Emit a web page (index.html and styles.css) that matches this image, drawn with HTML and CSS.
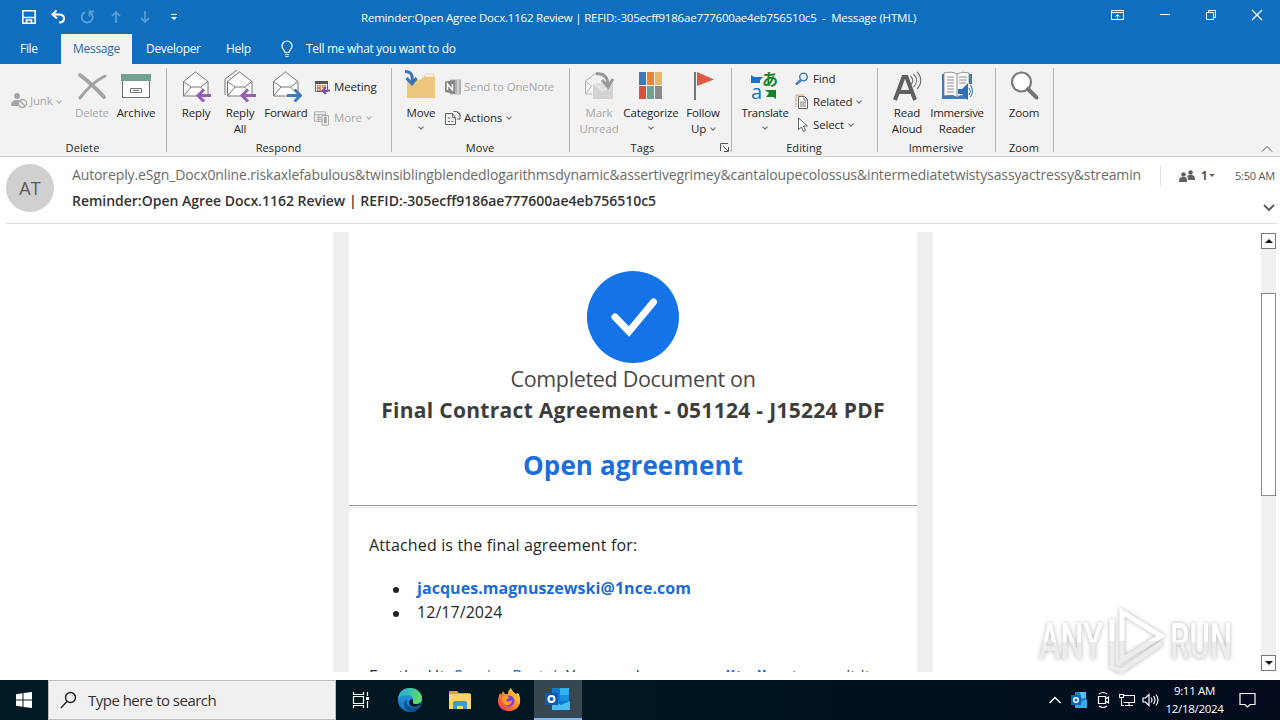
FILE: index.html
```html
<!DOCTYPE html>
<html lang="en">
<head>
<meta charset="utf-8">
<title>Message (HTML)</title>
<link rel="stylesheet" href="styles.css">
</head>
<body>
<div class="screen">
<header class="titlebar">
  <div class="quick">
    <svg width="16" height="16" viewBox="0 0 16 16" fill="none" stroke="#fff" stroke-width="1.600"><path d="M1.800 1.800h12.400v12.400H1.800zM2 8.500h12M5.500 14v-3h5v3"/></svg>
    <svg width="16" height="16" viewBox="0 0 16 16" fill="none" stroke="#fff" stroke-width="2"><path d="M6.500 1.500L2.500 5.500l4.500 4M3 5.500h6c3 0 5 1.500 5 4s-2 4-5 4"/></svg>
    <svg class="dim" width="16" height="16" viewBox="0 0 16 16" fill="none" stroke="#fff" stroke-width="2"><path d="M6 3a5.500 5.500 0 1 0 5 .3M10.500 7.500V2.500h4.500"/></svg>
    <svg class="dim" width="16" height="16" viewBox="0 0 16 16" fill="none" stroke="#fff" stroke-width="1.800"><path d="M8 14V3M4 7l4-4 4 4"/></svg>
    <svg class="dim" width="16" height="16" viewBox="0 0 16 16" fill="none" stroke="#fff" stroke-width="1.800"><path d="M8 2v11M4 9l4 4 4-4"/></svg>
    <svg width="16" height="16" viewBox="0 0 16 16" fill="#fff"><path d="M5 5h6v1H5zM5 8h6l-3 3z"/></svg>
  </div>
  <div class="title">Reminder:Open Agree Docx.1162 Review | REFID:-305ecff9186ae777600ae4eb756510c5&nbsp; -&nbsp; Message (HTML)</div>
  <div class="winctl">
    <svg width="14" height="14" viewBox="0 0 14 14" fill="none" stroke="#fff"><path d="M.5 2.500h12v9H.5zM.5 4.500h12M6.500 11V6.500M4.500 8.500l2-2 2 2"/></svg>
    <svg width="12" height="12" viewBox="0 0 12 12" fill="none" stroke="#fff"><path d="M1 5.500h10"/></svg>
    <svg width="12" height="12" viewBox="0 0 12 12" fill="none" stroke="#fff"><path d="M1.500 3.500h7v7h-7zM3.500 3.500v-2h7v7h-2"/></svg>
    <svg width="12" height="12" viewBox="0 0 12 12" fill="none" stroke="#fff" stroke-width="1.300"><path d="M1 1l10 10M11 1L1 11"/></svg>
  </div>
</header>
<nav class="tabs">
  <span class="tab tab-file">File</span>
  <span class="tab tab-on">Message</span>
  <span class="tab tab-dev">Developer</span>
  <span class="tab tab-help">Help</span>
  <span class="tell"><svg width="14" height="18" viewBox="0 0 14 18" fill="none" stroke="#fff" stroke-width="1.200"><path d="M5 12.500C5 10 2 9.500 2 6a5 5 0 0 1 10 0c0 3.500-3 4-3 6.500zM5 14.500h4M5.500 16.500h3"/></svg>Tell me what you want to do</span>
</nav>
<section class="ribbon">
  <div class="group g-delete">
    <div class="tools">
      <div class="junk off"><svg width="17" height="17" viewBox="0 0 17 17"><circle cx="6" cy="4" r="3" fill="#a6a6a6"/><path d="M0 14c0-5 3-6 6-6s3 1 3 2l-2 4z" fill="#a6a6a6"/><circle cx="11.500" cy="11.500" r="4" fill="#f2f2f2" stroke="#a6a6a6" stroke-width="1.400"/><path d="M9 9l5 5" stroke="#a6a6a6" stroke-width="1.400"/></svg><span>Junk</span><i class="chev"></i></div>
      <div class="big off"><svg width="32" height="32" viewBox="0 0 32 32" fill="none" stroke="#a3a3a3" stroke-linecap="round"><path d="M4 5q12 9 24 22" stroke-width="4"/><path d="M29 6Q15 13 4 28" stroke-width="3"/></svg><span>Delete</span></div>
      <div class="big"><svg width="32" height="32" viewBox="0 0 32 32"><path d="M2.500 10h27v17.500h-27z" fill="#fff" stroke="#707070"/><path d="M1 4h30v7H1z" fill="#6fa390"/><path d="M10.500 18.500h11v4h-11z" fill="#fff" stroke="#777"/><path d="M13 20.500h6" stroke="#777"/></svg><span>Archive</span></div>
    </div>
    <div class="caption">Delete</div>
  </div>
  <div class="group g-respond">
    <div class="tools">
      <div class="big"><svg width="32" height="32" viewBox="0 0 32 32" fill="none"><path d="M3.500 11.500L15.500 2l12.500 9.500v14.500H3.500z" fill="#fff" stroke="#777"/><path d="M3.500 11.500L11 17h9.500l7.500-5.500M3.500 26l7.500-9M20.500 17l4 4" stroke="#777"/><path d="M31 25.500H18M24 19.500l-6 6 6 6" stroke="#955cb8" stroke-width="3"/></svg><span>Reply</span></div>
      <div class="big"><svg width="32" height="32" viewBox="0 0 32 32" fill="none"><path d="M1 25V9L13 0" stroke="#777"/><path d="M3.500 11.500L15.500 2l12.500 9.500v14.500H3.500z" fill="#fff" stroke="#777"/><path d="M3.500 11.500L11 17h9.500l7.500-5.500M3.500 26l7.500-9M20.500 17l4 4" stroke="#777"/><path d="M32 25.500H18M24 19.500l-6 6 6 6" stroke="#955cb8" stroke-width="3"/></svg><span>Reply<br>All</span></div>
      <div class="big wide-fwd"><svg width="32" height="32" viewBox="0 0 32 32" fill="none"><path d="M3.500 11.500L15.500 2l12.500 9.500v14.500H3.500z" fill="#fff" stroke="#777"/><path d="M3.500 11.500L11 17h9.500l7.500-5.500M3.500 26l7.500-9M20.500 17l4 4" stroke="#777"/><path d="M17 25.500h13M24.500 19.500l6 6-6 6" stroke="#3f79b8" stroke-width="3"/></svg><span>Forward</span></div>
      <div class="stack two respond-stack">
        <div class="row"><svg width="16" height="16" viewBox="0 0 16 16" fill="none"><path d="M1.500 2.500h12v10h-12z" fill="#fff" stroke="#666"/><path d="M1 2h13v3H1z" fill="#555"/><path d="M3.500 6.500h3v2h-3zM8.500 6.500h3v2h-3zM3.500 9.500h3v2h-3z" stroke="#cf6c3a"/><path d="M16 11.500H9M12 8l-3.500 3.500L12 15" stroke="#8a49ac" stroke-width="2"/></svg><span>Meeting</span></div>
        <div class="row off"><svg width="16" height="16" viewBox="0 0 17 16" fill="none" stroke="#a6a6a6"><path d="M.5 1.500h12v10H.5zM.5 4.500h12M3 7.500h5M3 9.500h5M5 4v7" /><path d="M8.500 5.500h7v10h-7z" fill="#f2f2f2"/><path d="M11 7h2v6h-2z" fill="#a6a6a6"/></svg><span>More</span><i class="chev"></i></div>
      </div>
    </div>
    <div class="caption">Respond</div>
  </div>
  <div class="group g-move">
    <div class="tools">
      <div class="big"><svg width="32" height="32" viewBox="0 0 32 32" fill="none"><path d="M2 10h13l4-3h11v21H2z" fill="#edc77d"/><path d="M19 7l2-3h8v3z" fill="#fff" stroke="#e2b96a" stroke-width=".7"/><path d="M0 1.500c6 0 8 3 7 11M1.500 8l5.500 6 4.500-6" stroke="#3d74b3" stroke-width="3"/></svg><span>Move</span><i class="chev"></i></div>
      <div class="stack two move-stack">
        <div class="row"><svg class="faded" width="16" height="16" viewBox="0 0 16 16"><path d="M5 .5h11v15H5z" fill="#b0b0b0"/><path d="M0 2.500L10 1v14L0 13z" fill="#858585"/><path d="M2.500 11V5l5 6V5" stroke="#fff" fill="none" stroke-width="1.500"/><path d="M13 1v14" stroke="#f2f2f2"/></svg><span class="off">Send to OneNote</span></div>
        <div class="row tight"><svg width="17" height="16" viewBox="0 0 17 16" fill="none" stroke="#666"><path d="M5 3.500h-4.500v11h10v-7l-3-4zM7.500 3.500v4h3M3 8h2M3 11.500h2M6.500 11.500h2"/><path d="M8.500 1.500h3l3.500 3.500v4h-3M12 2c3 0 3 1 3 4"/></svg><span>Actions</span><i class="chev"></i></div>
      </div>
    </div>
    <div class="caption">Move</div>
  </div>
  <div class="group g-tags">
    <div class="tools">
      <div class="big off"><svg width="32" height="32" viewBox="0 0 32 32" fill="none"><path d="M2.500 24V11L14 2.500l10 7M2.500 11l6 5M2.500 24l6-8M2.500 24H9" stroke="#b3b3b3"/><path d="M10 13h20v16H10z" fill="#d5d2d5"/><path d="M10 13l10 8 10-8" stroke="#f5f5f5" fill="#dedede"/><path d="M13 4c8-1 12 3 12 12M19 10l6 7 5-8" stroke="#999" stroke-width="3"/></svg><span>Mark<br>Unread</span></div>
      <div class="big wide-cat"><svg width="32" height="32" viewBox="0 0 32 32"><path d="M4 2h7v13H4z" fill="#3f79b8"/><path d="M12 2h7v13h-7z" fill="#e8853a"/><path d="M20 2h7v13h-7z" fill="#e8b76b"/><path d="M4 16h7v13H4z" fill="#d4533b"/><path d="M12 16h7v13h-7z" fill="#6fa390"/><path d="M20 16h7v13h-7z" fill="#8b8b8b"/></svg><span>Categorize</span><i class="chev"></i></div>
      <div class="big"><svg width="32" height="32" viewBox="0 0 32 32"><path d="M7 2h2v28H7z" fill="#777"/><path d="M10 2l17 7.500L10 16z" fill="#dd5b43"/></svg><span>Follow<br>Up <i class="chev"></i></span></div>
    </div>
    <div class="caption">Tags</div>
    <svg class="launcher" width="9" height="9" viewBox="0 0 9 9" fill="none" stroke="#555"><path d="M.5 8V.5H8M3 3l5 5M8.500 4v4.500H4"/></svg>
  </div>
  <div class="group g-editing">
    <div class="tools">
      <div class="big wide-tr"><svg class="spill" width="32" height="32" viewBox="0 0 32 32"><path d="M2 5l3 2h9l-3 3v3H2z" fill="#1673c8"/><path d="M16 20h11v9l-3-2h-7l3-4z" fill="#128427"/><text x="2" y="29" class="ic-a">a</text><text x="13" y="15" class="ic-jp">あ</text></svg><span>Translate</span><i class="chev"></i></div>
      <div class="stack three">
        <div class="row"><svg width="14" height="14" viewBox="0 0 14 14" fill="none" stroke="#4a7ebb"><circle cx="8.500" cy="5" r="3.800" stroke-width="1.500"/><path d="M6 8l-5 4.500" stroke-width="2.500"/></svg><span>Find</span></div>
        <div class="row"><svg width="14" height="16" viewBox="0 0 14 16" fill="none"><path d="M1 13V1h8" stroke="#dda47d"/><path d="M3.500 2.500h6l3 3v9h-9z" fill="#fff" stroke="#666"/><path d="M9 3v3h3M5 8h6M5 10h6M5 12h6" stroke="#777"/></svg><span>Related</span><i class="chev"></i></div>
        <div class="row"><svg width="14" height="16" viewBox="0 0 14 16"><path d="M3.500 1v11.500l3-2.500 2 4.500 2-1-2-4.500h4z" fill="#fff" stroke="#666"/></svg><span>Select</span><i class="chev"></i></div>
      </div>
    </div>
    <div class="caption">Editing</div>
  </div>
  <div class="group g-immersive">
    <div class="tools">
      <div class="big"><svg width="32" height="32" viewBox="0 0 32 32" fill="none"><path d="M4 30L12.500 7h3L24 30M8 22h12" stroke="#606060" stroke-width="4"/><path d="M19.500 6c3 3 3 6 0 9M22.500 4c4 4 4 9 0 13M26 2c5 5 5 12 0 17" stroke="#707070" stroke-width="1.200"/></svg><span>Read<br>Aloud</span></div>
      <div class="big wide-im"><svg width="32" height="32" viewBox="0 0 32 32" fill="none"><path d="M1 4h30v25H1z" fill="#3f79b8"/><path d="M3 3q8-2 13 1 5-3 12-1v23q-8-2-12 1-5-3-13-1z" fill="#fff" stroke="#777" stroke-width=".8"/><path d="M16 4v23M6 7h7M6 10h7M6 13h7M6 16h7M6 19h7M6 22h7M18 7h8M18 10h8M18 13h7" stroke="#888"/><path d="M27 14h5v16h-5z" fill="#f2f2f2"/><path d="M17 19h4l6-6v17l-6-6h-4z" fill="#2f70b2"/><path d="M28 18q3 3 0 7M29.500 15q4 6 0 12" stroke="#2f70b2"/></svg><span>Immersive<br>Reader</span></div>
    </div>
    <div class="caption">Immersive</div>
  </div>
  <div class="group g-zoom">
    <div class="tools">
      <div class="big"><svg width="32" height="32" viewBox="0 0 32 32"><circle cx="13.500" cy="12" r="9.500" fill="#fff" stroke="#7b7b7b" stroke-width="2.200"/><path d="M20 19l8.500 8.500" stroke="#757575" stroke-width="4" stroke-linecap="round"/></svg><span>Zoom</span></div>
    </div>
    <div class="caption">Zoom</div>
  </div>
  <svg class="collapse" width="12" height="8" viewBox="0 0 12 8" fill="none" stroke="#555"><path d="M1 6.500l5-5 5 5"/></svg>
</section>
<section class="msghead">
  <div class="avatar">AT</div>
  <div class="who">
    <div class="from">Autoreply.eSgn_Docx0nline.riskaxlefabulous&amp;twinsiblingblendedlogarithmsdynamic&amp;assertivegrimey&amp;cantaloupecolossus&amp;intermediatetwistysassyactressy&amp;streamin</div>
    <div class="subject">Reminder:Open Agree Docx.1162 Review | REFID:-305ecff9186ae777600ae4eb756510c5</div>
  </div>
  <div class="meta">
    <div class="people"><svg width="16" height="12" viewBox="0 0 16 12" fill="#606060"><circle cx="4.500" cy="4.500" r="2.300"/><path d="M0 12c0-4 1-5 4.500-5S8 8 8 12z"/><circle cx="11.500" cy="2.500" r="2.300"/><path d="M8 6c1-1 2-1 3.500-1C15 5 16 6 16 10H9c0-2 0-3-1-4z"/></svg><b>1</b><i class="tri"></i></div>
    <div class="time">5:50 AM</div>
  </div>
  <svg class="expand" width="12" height="8" viewBox="0 0 12 8" fill="none" stroke="#606060" stroke-width="2"><path d="M1 1l5 5 5-5"/></svg>
</section>
<main class="reading">
  <article class="mail">
    <svg class="check" width="92" height="92" viewBox="0 0 92 92"><circle cx="46" cy="46" r="46" fill="#1473e6"/><path d="M28 46l14 14.500L66.500 31" fill="none" stroke="#fff" stroke-width="7" stroke-linecap="round" stroke-linejoin="miter"/></svg>
    <div class="done">Completed Document on</div>
    <div class="doc">Final Contract Agreement - 051124 - J15224 PDF</div>
    <div class="open">Open agreement</div>
    <hr>
    <p>Attached is the final agreement for:</p>
    <ul><li><b>jacques.magnuszewski@1nce.com</b></li><li>12/17/2024</li></ul>
    <p class="cut">For the Ht. <a>Service Portal</a>. You may have an <b>audit all</b> or transmit it.</p>
  </article>
  <div class="scroll">
    <span class="sb up"></span><span class="thumb"></span><span class="sb down"></span>
  </div>
</main>
<footer class="taskbar">
  <div class="start"><svg width="16" height="16" viewBox="0 0 16 16" fill="#fff"><path d="M0 2.200L6.500 1.300v6.200H0zM7.500 1.100L16 0v7.500H7.500zM0 8.500h6.500v6.200L0 13.800zM7.500 8.500H16V16l-8.500-1.100z"/></svg></div>
  <div class="search"><svg width="18" height="18" viewBox="0 0 18 18" fill="none" stroke="#222" stroke-width="1.400"><circle cx="10.500" cy="6.500" r="5"/><path d="M7 10.500L.8 17"/></svg>Type here to search</div>
  <div class="app"><svg width="18" height="18" viewBox="0 0 18 18" fill="none" stroke="#fff" stroke-width="1.200"><path d="M1.500 5.500h10v7h-10zM1.500 1v2.500h10V1M1.500 17v-2.500h10V17M15.500 1v4M15.500 10v7"/><path d="M14 6h3v3h-3z" fill="#fff" stroke="none"/></svg></div>
  <div class="app"><svg width="24" height="24" viewBox="0 0 24 24"><defs><linearGradient id="ea" x1="0" y1="0" x2="1" y2=".4"><stop offset="0" stop-color="#1ea5e8"/><stop offset="1" stop-color="#5fdb69"/></linearGradient><linearGradient id="eb" x1="0" y1="0" x2="0" y2="1"><stop offset="0" stop-color="#27a8e8"/><stop offset="1" stop-color="#1467bd"/></linearGradient></defs><circle cx="12" cy="12" r="12" fill="url(#eb)"/><path d="M0 11C1 3 6 0 12 0c7 0 12 5 12 10 0 4-3 6-7 6-3 0-3-1-2-3 1-4-3-7-7-6-4 0-7 2-8 4z" fill="url(#ea)"/><path d="M9 11c-2 6 4 11 13 7-3 4-6 6-10 6-6-2-8-9-3-13z" fill="#125094"/><path d="M15 13c-1 2 0 3 2 3 2 .2 4 0 5-.700l1 .7c-2 2-5 3-8 2.500-3-.5-5-3.500-3-6.500 1-1 3-1 3 1z" fill="#001820"/></svg></div>
  <div class="app"><svg width="22" height="20" viewBox="0 0 22 20"><path d="M0 1h8l2 2h11v5H0z" fill="#e3a02d"/><path d="M0 4h22v15H0z" fill="#fbd568"/><path d="M4 19v-6q0-2 2-2h10q2 0 2 2v6h-4v-3H8v3z" fill="#3a9bdc"/></svg></div>
  <div class="app"><svg width="24" height="24" viewBox="0 0 24 24"><defs><linearGradient id="ff" x1="1" y1="0" x2="0" y2="1"><stop offset="0" stop-color="#fff04a"/><stop offset=".45" stop-color="#ff9327"/><stop offset="1" stop-color="#f4255b"/></linearGradient></defs><path d="M3 5l1 2 2-4 2 3h3c0-3 1-4 3-6 1 3 3 4 5 6l2-1c3 4 2 9 2 10-2 6-6 8-11 8C5 23 1 19 1 13c0-3 1-6 2-8z" fill="url(#ff)"/><circle cx="12" cy="13" r="5.500" fill="#7b40d9"/><path d="M5 8c3-1 5 0 7 1 0 2-3 2-3 3 1 2 4 2 6 0 0 4-3 6-6 5-3-1-4-4-4-9z" fill="#ff9a2b"/></svg></div>
  <div class="app active"><svg width="26" height="24" viewBox="0 0 26 24"><path d="M7 1h17v19H7z" fill="#1677cc"/><path d="M15 1h9v7h-9z" fill="#32b2ed"/><path d="M15 8h9v6h-9z" fill="#1590db"/><path d="M7 14l9 4 9-4v9H7z" fill="#48bfef"/><path d="M0 6h13v12H0z" fill="#0b5cad"/><circle cx="6.500" cy="12" r="3" fill="none" stroke="#fff" stroke-width="2"/></svg></div>
  <div class="tray">
    <svg class="t-up" width="12" height="8" viewBox="0 0 12 8" fill="none" stroke="#fff" stroke-width="1.400"><path d="M.5 7L6 1.500 11.500 7"/></svg>
    <svg class="t-ol" width="16" height="16" viewBox="0 0 16 16"><path d="M4 0h11v16H4z" fill="#1b82d1"/><path d="M9 0h6v6H9z" fill="#50c4f1"/><path d="M4 12l6-2 6-3v9H4z" fill="#38abe5"/><path d="M0 3h10v10H0z" fill="#0868b8"/><circle cx="5" cy="8" r="2.300" fill="none" stroke="#fff" stroke-width="1.500"/></svg>
    <svg class="t-cam" width="14" height="18" viewBox="0 0 14 18" fill="none" stroke="#fff" stroke-width="1.200"><path d="M1.500 5.500h7v7h-7zM8.500 8l3-2v6l-3-2M2 3q4-3 8 0M2 15q4 3 8 0"/></svg>
    <svg class="t-net" width="17" height="14" viewBox="0 0 17 14" fill="none" stroke="#fff" stroke-width="1.100"><path d="M4.500 2.500h11v7H4.500M10 9.500v3M6 12.500h8M.5 1.500h4v3h-4zM2.500 4.500v8H5"/></svg>
    <svg class="t-vol" width="17" height="14" viewBox="0 0 17 14" fill="none" stroke="#fff" stroke-width="1.200"><path d="M1 5h2.500L7 1.500v11L3.500 9H1zM9 4.500q2 2.500 0 5M11.500 3q3 4 0 8M14 1.500q4 5.500 0 11"/></svg>
    <div class="clock">9:11 AM<br>12/18/2024</div>
    <svg class="t-note" width="17" height="16" viewBox="0 0 17 16" fill="none" stroke="#fff" stroke-width="1.200"><path d="M1 1.500h15v11h-5l-2.500 2.500L6 12.500H1z"/></svg>
  </div>
</footer>
<svg class="mark" width="210" height="74" viewBox="0 0 210 74">
  <defs><linearGradient id="mk" x1="0" y1="0" x2="0" y2="1"><stop offset=".5" stop-color="#fff"/><stop offset=".5" stop-color="#ececec"/></linearGradient></defs>
  <g class="mark-shade"><text x="9" y="55" fill="url(#mk)" textLength="64" lengthAdjust="spacingAndGlyphs">ANY</text><text x="140" y="55" fill="url(#mk)" textLength="62" lengthAdjust="spacingAndGlyphs">RUN</text>
  <path d="M92 8l39 24-39 24zM82 15v48l9 4 41-28" fill="none" stroke="url(#mk)" stroke-width="5"/></g>
</svg>
</div>
</body>
</html>
```
FILE: styles.css
```css
* { box-sizing: border-box; }
body { margin: 0; font-family: "Open Sans", "Noto Sans", sans-serif; font-size: 11.5px; color: #262626; }
svg { display: block; flex: none; }
.screen { position: relative; width: 1280px; height: 720px; overflow: hidden; background: #fff; display: flex; flex-direction: column; }
.titlebar { height: 34px; flex: none; background: #106ebe; color: #fff; display: flex; align-items: center; }
.quick { width: 361px; padding-left: 21px; display: flex; gap: 13px; }
.dim { opacity: .3; }
.title { width: 558px; white-space: nowrap; line-height: 16px; padding-top: 2px; letter-spacing: -.2px; }
.winctl { margin-left: auto; padding-right: 17px; display: flex; align-items: center; gap: 34px; margin-top: -4px; }
.tabs { height: 30px; flex: none; background: #106ebe; color: #fff; display: flex; line-height: 30px; font-size: 12px; letter-spacing: -.3px; }
.tab-file { width: 61px; padding-left: 20px; }
.tab-on { width: 71px; text-align: center; background: #f3f3f3; color: #236bb0; }
.tab-dev { width: 94px; padding-left: 14px; }
.tab-help { width: 53px; }
.tell { display: flex; align-items: center; gap: 12px; padding-left: 1px; }
.ribbon { position: relative; height: 93px; flex: none; background: #f2f2f2; border-bottom: 1px solid #cfcfcf; display: flex; letter-spacing: -.15px; }
.group { position: relative; height: 92px; padding-top: 6px; display: flex; flex-direction: column; }
.group::after { content: ""; position: absolute; right: 0; top: 4px; height: 84px; width: 1px; background: #b5b5b5; }
.tools { height: 70px; display: flex; align-items: flex-start; }
.caption { text-align: center; line-height: 16px; font-size: 11px; letter-spacing: .1px; padding-right: 2px; }
.g-delete { width: 167px; }
.g-respond { width: 225px; }
.g-move { width: 178px; }
.g-tags { width: 162px; }
.g-editing { width: 146px; }
.g-immersive { width: 118px; }
.g-zoom { width: 58px; }
.g-respond .tools, .g-move .tools, .g-tags .tools, .g-immersive .tools { padding-left: 7px; }
.g-editing .tools { padding-left: 3px; }
.g-zoom .tools { padding-left: 6px; }
.g-tags .caption { padding-right: 17px; }
.big { width: 44px; display: flex; flex-direction: column; align-items: center; text-align: center; line-height: 16px; white-space: nowrap; }
.big > span { margin-top: 3px; }
.wide-fwd { width: 48px; }
.wide-cat, .wide-tr { width: 60px; }
.wide-tr, .wide-im { letter-spacing: -.3px; }
.wide-im { width: 56px; }
.spill { overflow: visible; }
.off { color: #a8a8a8; }
.junk { width: 70px; padding: 22px 0 0 11px; display: flex; align-items: center; gap: 2px; }
.chev { display: inline-block; width: 4px; height: 4px; border: solid #666; border-width: 0 1px 1px 0; transform: rotate(45deg); margin-left: 2px; vertical-align: 3px; flex: none; }
.big > .chev { margin: 4px 0 0; }
.off .chev { border-color: #aaa; }
.stack { display: flex; flex-direction: column; }
.two { gap: 15px; padding-top: 9px; }
.three { gap: 7px; padding-top: 1px; }
.respond-stack { padding-left: 4px; }
.move-stack { padding-left: 2px; }
.row { height: 16px; display: flex; align-items: center; gap: 4px; line-height: 16px; white-space: nowrap; }
.row.tight { gap: 2px; }
.move-stack .row { gap: 3px; }
.move-stack .tight { gap: 2px; }
.row .chev { margin-left: 1px; margin-top: -2px; }
.tight .chev { margin-left: 3px; }
.launcher { position: absolute; right: 3px; bottom: 4px; }
.collapse { position: absolute; right: 7px; bottom: 3px; }
.ic-a { font: 20px "Open Sans", sans-serif; fill: #1673c8; }
.ic-jp { font: bold 16px "Noto Sans CJK JP", sans-serif; fill: #128427; }
.msghead { position: relative; height: 66px; flex: none; display: flex; padding-left: 6px; }
.msghead::after { content: ""; position: absolute; left: 6px; right: 3px; bottom: -1px; height: 1px; background: #dedede; }
.avatar { width: 48px; height: 48px; margin-top: 7px; border-radius: 50%; background: #d0d0d0; color: #5a5a5a; font-size: 18px; line-height: 48px; text-align: center; }
.who { width: 1088px; padding: 7px 0 0 18px; white-space: nowrap; }
.from { font-size: 14px; line-height: 22px; color: #6a6a6a; width: 1070px; letter-spacing: -.12px; }
.subject { font-size: 14px; font-weight: 600; line-height: 22px; margin-top: 4px; color: #333; letter-spacing: -.015px; }
.meta { display: flex; height: 21px; margin-top: 8px; margin-left: 18px; align-items: center; border-left: 1px solid #e1e1e1; color: #555; }
.people { width: 74px; padding-left: 18px; display: flex; align-items: center; gap: 6px; }
.tri { border: 3px solid transparent; border-top-color: #666; margin: 3px 0 0 -5px; }
.time { font-size: 11px; letter-spacing: -.2px; white-space: nowrap; }
.expand { position: absolute; right: 5px; top: 47px; }
.reading { height: 457px; flex: none; padding-top: 9px; display: flex; }
.mail { width: 600px; height: 440px; margin-left: 333px; border: solid #efefef; border-width: 0 16px; overflow: hidden; text-align: center; padding-top: 39px; }
.check { margin: 0 auto; }
.done { font-size: 21.5px; line-height: 32px; color: #484848; letter-spacing: -.33px; }
.doc { font-size: 21px; font-weight: 700; line-height: 31px; color: #3d3d3d; white-space: nowrap; letter-spacing: .3px; }
.open { font-size: 26px; font-weight: 700; line-height: 36px; margin-top: 21px; color: #1b6fdc; letter-spacing: .1px; }
.mail hr { border: solid #999; border-width: 1px 0 0; margin: 22px 0 0; box-shadow: 0 2px 0 #ececec; }
.mail p { text-align: left; margin: 27px 20px 0; font-size: 16px; line-height: 24px; letter-spacing: .15px; white-space: nowrap; }
.mail ul { margin: 19px 0 0; padding-left: 43px; list-style: none; text-align: left; font-size: 16px; line-height: 24px; letter-spacing: .05px; }
.mail li { display: flex; align-items: center; gap: 18px; }
.mail li::before { content: ""; width: 6px; height: 6px; margin-left: 1px; margin-top: 3px; margin-right: 0; border-radius: 50%; background: #222; }
.mail b, .mail a { color: #1b6bd0; }
.mail .cut { margin-top: 40px; }
.scroll { width: 15px; height: 438px; margin: 1px 4px 0 auto; background: #f0f0f0; display: flex; flex-direction: column; justify-content: space-between; }
.sb { height: 16px; width: 15px; border: 1px solid #777; background: #fff; display: flex; align-items: center; justify-content: center; }
.sb::after { content: ""; border: solid transparent; border-width: 4px; }
.up::after { border-bottom-color: #111; border-top: 0; }
.down::after { border-top-color: #111; border-bottom: 0; }
.thumb { height: 203px; width: 15px; margin-bottom: 115px; border: 1px solid #888; background: #fff; }
.taskbar { height: 40px; flex: none; background: linear-gradient(90deg, #001b24, #00141f 60%, #030b1d); display: flex; color: #fff; }
.start { width: 48px; display: flex; align-items: center; justify-content: center; }
.search { width: 288px; background: #f0f0f0; border: 1px solid #bdbdbd; color: #333; display: flex; align-items: center; gap: 10px; padding-left: 11px; font-size: 15px; letter-spacing: -.52px; }
.app { width: 49.5px; display: flex; align-items: center; justify-content: center; }
.app.active { width: 48px; background: #37474f; border-bottom: 2px solid #79b9ef; }
.tray { margin-left: auto; width: 231px; display: flex; align-items: center; }
.t-ol { margin-left: 10px; }
.t-cam { margin-left: 10px; }
.t-net { margin-left: 8px; }
.t-vol { margin-left: 6px; }
.clock { width: 71px; text-align: center; font-size: 11.5px; line-height: 18px; letter-spacing: -.3px; }
.t-note { margin-left: 9px; }
.mark { position: absolute; left: 1030px; top: 604px; }
.mark-shade { filter: drop-shadow(0 0 2px #b4b4b4); font: 500 50px Roboto, sans-serif; }
```
